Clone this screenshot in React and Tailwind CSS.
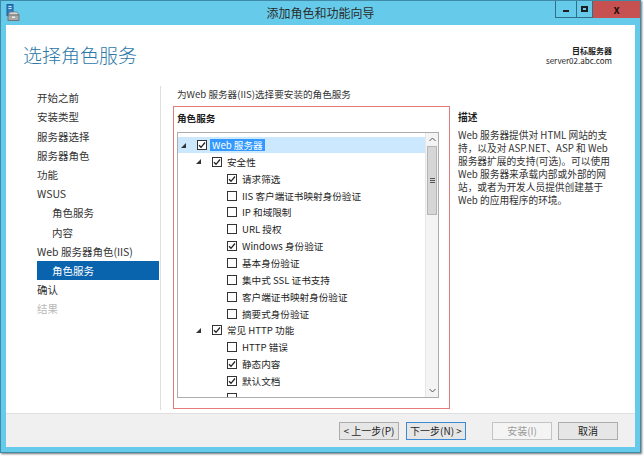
import React from 'react';

const navItems = [
  { t: '开始之前' },
  { t: '安装类型' },
  { t: '服务器选择' },
  { t: '服务器角色' },
  { t: '功能' },
  { t: 'WSUS' },
  { t: '角色服务', sub: true },
  { t: '内容', sub: true },
  { t: 'Web 服务器角色(IIS)' },
  { t: '角色服务', sub: true, active: true },
  { t: '确认' },
  { t: '结果', disabled: true },
];

// last row is only partly visible (checkbox top), so it has no text
const treeRows = [
  { t: 'Web 服务器', level: 0, exp: true, on: true, sel: true },
  { t: '安全性', level: 1, exp: true, on: true },
  { t: '请求筛选', level: 2, on: true },
  { t: 'IIS 客户端证书映射身份验证', level: 2 },
  { t: 'IP 和域限制', level: 2 },
  { t: 'URL 授权', level: 2 },
  { t: 'Windows 身份验证', level: 2, on: true },
  { t: '基本身份验证', level: 2 },
  { t: '集中式 SSL 证书支持', level: 2 },
  { t: '客户端证书映射身份验证', level: 2 },
  { t: '摘要式身份验证', level: 2 },
  { t: '常见 HTTP 功能', level: 1, exp: true, on: true },
  { t: 'HTTP 错误', level: 2 },
  { t: '静态内容', level: 2, on: true },
  { t: '默认文档', level: 2, on: true },
  { t: '', level: 2 },
];

const indent = ['pl-[3px]', 'pl-[18px]', 'pl-[33px]'];

function Check({ on }) {
  return (
    <span className="w-[10px] h-[10px] border border-[#333] bg-white flex items-center justify-center shrink-0">
      {on && (
        <svg width="8" height="8" viewBox="0 0 8 8">
          <path d="M1 4.2 L3 6.3 L7 1.5" fill="none" stroke="#222" strokeWidth="1.3" />
        </svg>
      )}
    </span>
  );
}

function Expander({ exp }) {
  return (
    <span className="w-[16px] h-[16px] flex items-center shrink-0">
      {exp && (
        <svg width="5" height="5" viewBox="0 0 5 5">
          <polygon points="5,0 5,5 0,5" fill="#333" />
        </svg>
      )}
    </span>
  );
}

function TreeRow({ row }) {
  return (
    <div
      className={`h-[16.86px] flex items-center ${indent[row.level]} ${row.sel ? 'bg-[#cce8ff]' : ''}`}
    >
      <Expander exp={row.exp} />
      <Check on={row.on} />
      {row.t && (
        <span
          className={`ml-[3px] px-[2px] leading-[12px] whitespace-nowrap ${
            row.sel ? 'bg-[#3399ff] text-white' : 'text-[#1e1e1e]'
          }`}
        >
          {row.t}
        </span>
      )}
    </div>
  );
}

function Btn({ children, focus, disabled }) {
  return (
    <button
      className={`w-[60px] h-[18px] text-[10px] leading-none flex items-center justify-center border ${
        focus
          ? 'border-[#3c8ad6] bg-[#e6e6e6] text-[#1e1e1e]'
          : disabled
          ? 'border-[#c4c4c4] bg-[#f4f4f4] text-[#9a9a9a]'
          : 'border-[#acacac] bg-[#e6e6e6] text-[#1e1e1e]'
      }`}
    >
      {children}
    </button>
  );
}

export default function App() {
  return (
    <div className="w-[644px] h-[458px] bg-white font-['Noto_Sans_CJK_SC','Noto_Sans',sans-serif]">
      <div className="w-[641px] h-[453px] border border-[#3f8aa6] bg-[#66cbea] flex flex-col pl-[5px] pr-[5px] pb-[5px] shadow-[1px_1px_2px_rgba(0,0,0,0.55)]">
        {/* title bar */}
        <div className="h-[24px] grid grid-cols-[1fr_auto_1fr] -mx-[5px]">
          <div className="pl-[5px] pt-[3px]">
            <svg width="14" height="18" viewBox="0 0 14 18">
              <rect x="1" y="0.5" width="6" height="11" fill="#2f7fc1" stroke="#1d5f97" />
              <rect x="2.5" y="2" width="3" height="1" fill="#cfe8fb" />
              <rect x="2.5" y="4" width="3" height="1" fill="#cfe8fb" />
              <path d="M2 11 L4 8 L11 8 L13 11 Z" fill="#d9d9d9" stroke="#777" strokeWidth="0.8" />
              <rect x="2" y="11" width="11" height="5.5" fill="#a9a9a9" stroke="#666" strokeWidth="0.8" />
              <rect x="6" y="12.5" width="3" height="1.5" fill="#eee" />
            </svg>
          </div>
          <div className="text-[12px] leading-[24px] text-[#2b2b2b] text-center">添加角色和功能向导</div>
          <div className="flex justify-end items-start">
            <div className="w-[22px] h-[17px] border border-[#2f6f88] border-t-0 flex items-center justify-center">
              <span className="w-[6px] h-[2px] bg-[#1e1e1e] mt-[3px]" />
            </div>
            <div className="w-[16px] h-[17px] border-b border-r border-[#2f6f88] flex items-center justify-center">
              <span className="w-[7px] h-[6px] border-2 border-[#1e1e1e]" />
            </div>
            <div className="w-[47px] h-[17px] bg-[#c75050] flex items-center justify-center text-[11px] font-bold text-[#2a1010] leading-none">
              x
            </div>
          </div>
        </div>

        {/* client */}
        <div className="flex-1 bg-white flex flex-col">
          {/* header */}
          <div className="h-[61px] flex justify-between pl-[17px] pr-[23px] pt-[18px]">
            <div className="text-[19px] leading-[24px] text-[#2b78a8] font-light">选择角色服务</div>
            <div className="text-right mt-[3px] text-[8px] leading-[10px] text-[#222]">
              <div className="font-bold">目标服务器</div>
              <div>server02.abc.com</div>
            </div>
          </div>

          {/* body */}
          <div className="flex-1 flex">
            <div className="w-[155px] border-r border-[#dedede] mb-[3px] pl-[31px] pr-[1px] pt-[2.5px]">
              {navItems.map((n, i) => (
                <div
                  key={i}
                  className={`h-[19.2px] flex items-center text-[10.5px] whitespace-nowrap ${n.sub ? 'pl-[15px]' : ''} ${
                    n.active ? 'bg-[#0a64ad] text-white' : n.disabled ? 'text-[#b8b8b8]' : 'text-[#333]'
                  }`}
                >
                  {n.t}
                </div>
              ))}
            </div>

            <div className="flex-1 pl-[16px] pt-[1px]">
              <div className="text-[9.6px] leading-[14px] text-[#333]">为Web 服务器(IIS)选择要安装的角色服务</div>
              <div className="flex mt-[5px]">
                <div className="-ml-[4px] w-[277px] h-[303px] border border-[#e57c7c] pl-[3px] pt-[4px]">
                  <div className="text-[9.6px] leading-[14px] font-bold text-[#1e1e1e]">角色服务</div>
                  <div className="mt-[7px] w-[262px] h-[266px] border border-[#acacac] flex text-[9.6px] overflow-hidden">
                    <div className="flex-1 pt-[3.6px]">
                      {treeRows.map((r, i) => (
                        <TreeRow key={i} row={r} />
                      ))}
                    </div>
                    <div className="w-[13px] bg-[#f4f4f4] border-l border-[#e6e6e6] flex flex-col">
                      <div className="h-[13px] flex items-center justify-center">
                        <svg width="7" height="5" viewBox="0 0 7 5">
                          <path d="M0.5 4 L3.5 1 L6.5 4" fill="none" stroke="#555" strokeWidth="1" />
                        </svg>
                      </div>
                      <div className="h-[69px] mx-[1px] bg-[#d6d6d6] border border-[#b5b5b5] flex flex-col items-center justify-center gap-[1px]">
                        <span className="w-[5px] h-[1px] bg-[#555]" />
                        <span className="w-[5px] h-[1px] bg-[#555]" />
                        <span className="w-[5px] h-[1px] bg-[#555]" />
                      </div>
                      <div className="flex-1" />
                      <div className="h-[13px] flex items-center justify-center">
                        <svg width="7" height="5" viewBox="0 0 7 5">
                          <path d="M0.5 1 L3.5 4 L6.5 1" fill="none" stroke="#555" strokeWidth="1" />
                        </svg>
                      </div>
                    </div>
                  </div>
                </div>

                <div className="ml-[8px] pt-[4px] text-[9.7px] text-[#333]">
                  <div className="font-bold leading-[14px] text-[#1e1e1e]">描述</div>
                  <div className="mt-[5px] leading-[13px] whitespace-nowrap">
                    <div>Web 服务器提供对 HTML 网站的支</div>
                    <div>持，以及对 ASP.NET、ASP 和 Web</div>
                    <div>服务器扩展的支持(可选)。可以使用</div>
                    <div>Web 服务器来承载内部或外部的网</div>
                    <div>站，或者为开发人员提供创建基于</div>
                    <div>Web 的应用程序的环境。</div>
                  </div>
                </div>
              </div>
            </div>
          </div>

          {/* footer */}
          <div className="h-[34px] bg-[#f0f0f0] border-t border-[#dfdfdf] flex items-center justify-end pr-[17px]">
            <Btn>&lt; 上一步(P)</Btn>
            <div className="w-[7px]" />
            <Btn focus>下一步(N) &gt;</Btn>
            <div className="w-[26px]" />
            <Btn disabled>安装(I)</Btn>
            <div className="w-[6px]" />
            <Btn>取消</Btn>
          </div>
        </div>
      </div>
    </div>
  );
}
